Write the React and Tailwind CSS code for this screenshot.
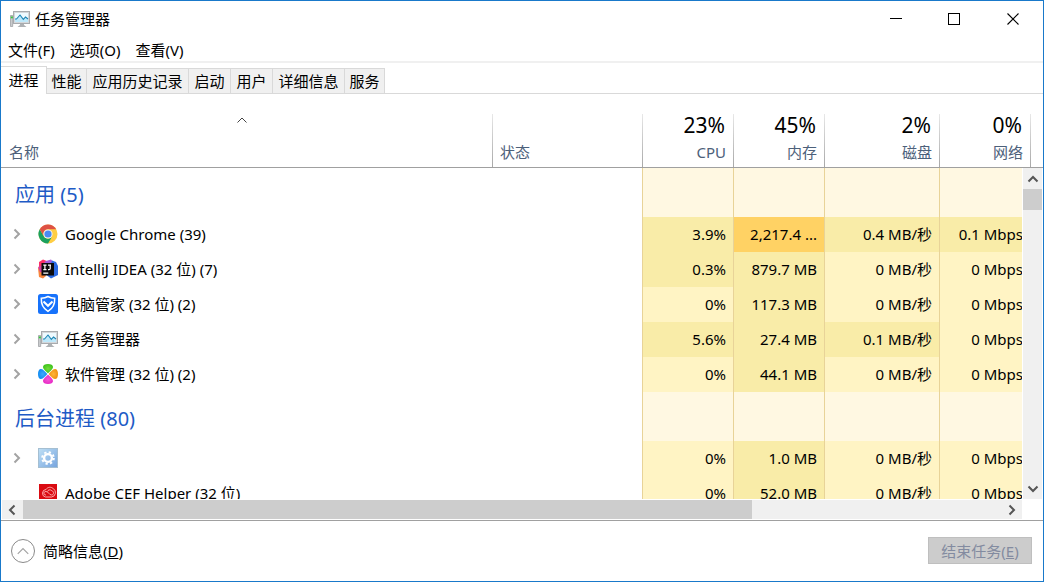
import React from "react";

function MonitorIcon() {
  return (
    <svg width="20" height="18" viewBox="0 0 20 18" className="shrink-0" aria-hidden="true">
      <path d="M10 13h4v2l2.500 2H7.500l2.500-2z" fill="#aeb1b4" />
      <path d="M0.500 5.500h2.200v11H.5z" fill="#c9cbcd" stroke="#96999c" strokeWidth="0.700" />
      <path d="M0.800 6.500h2v1.800h-2z" fill="#35c93b" />
      <rect x="3.500" y="1.500" width="16" height="12" fill="#d4d7da" stroke="#a8abae" />
      <rect x="5" y="3" width="13" height="9" fill="#eefaff" />
      <path d="M5 9h1.500L10 5l3.300 4.300L15.500 7 18 9v3H5z" fill="#bde8fa" />
      <path d="M5 9h1.500L10 5l3.300 4.300L15.500 7 18 9" fill="none" stroke="#1f86b5" strokeWidth="1.100" />
    </svg>
  );
}

function ChromeIcon() {
  return (
    <svg width="20" height="20" viewBox="0 0 20 20" aria-hidden="true">
      <circle cx="10" cy="10" r="9.500" fill="#ffce44" />
      <path d="M1.770 5.250A9.500 9.500 0 0 0 10 19.500L14.110 12.380A4.750 4.750 0 0 1 5.890 12.380z" fill="#1aa15f" />
      <path d="M1.770 5.250A9.500 9.500 0 0 1 18.230 5.250H10A4.750 4.750 0 0 0 5.890 12.380z" fill="#de5145" />
      <circle cx="10" cy="10" r="4.600" fill="#f4f4f4" />
      <circle cx="10" cy="10" r="3.600" fill="#4a8af4" />
    </svg>
  );
}

function IdeaIcon() {
  return (
    <svg width="20" height="20" viewBox="0 0 20 20" aria-hidden="true">
      <path d="M1 3L5 .5l5 2-2 9-7-3z" fill="#fc3067" />
      <path d="M8 2l5-1.500L16 4l-6 4-4-4z" fill="#a45cdc" />
      <path d="M14 1.500l4 1.500 2 4v9l-7 3.500-4-3z" fill="#2b6be4" />
      <path d="M0 9l4 1 4 7-3 2.500L1 18z" fill="#f8863c" />
      <path d="M0 8l5-2v8l-3-1z" fill="#d63f9b" />
      <rect x="3.500" y="4" width="12.500" height="12.500" fill="#0b0b0d" />
      <path d="M5.300 6.200h3.200M6.900 6.200v4.500M5.300 10.700h3.200M10 6.200h3M12.200 6.200v3.300q0 1.200-1.200 1.200h-1M5.300 14.200h5" fill="none" stroke="#fff" strokeWidth="1.200" />
    </svg>
  );
}

function ShieldIcon() {
  return (
    <svg width="20" height="20" viewBox="0 0 20 20" aria-hidden="true">
      <rect width="20" height="20" rx="2.500" fill="#1772fb" />
      <path d="M10 2.500c2.200 1.300 4.300 1.700 6.700 1.800.3 5.600-1.500 10-6.700 13.100C4.800 14.300 3 9.900 3.300 4.300 5.700 4.200 7.800 3.800 10 2.500z" fill="none" stroke="#fff" strokeWidth="1.500" />
      <path d="M5.500 7.500L10 11.800l4.500-4.300" fill="none" stroke="#fff" strokeWidth="2" />
    </svg>
  );
}

function CloverIcon() {
  return (
    <svg width="20" height="20" viewBox="0 0 20 20" aria-hidden="true">
      <defs>
        <radialGradient id="clover-green"><stop offset="0" stopColor="#74dc3c" /><stop offset="1" stopColor="#3fc41c" /></radialGradient>
        <radialGradient id="clover-orange"><stop offset="0" stopColor="#ffb63c" /><stop offset="1" stopColor="#f09412" /></radialGradient>
        <radialGradient id="clover-pink"><stop offset="0" stopColor="#f458d6" /><stop offset="1" stopColor="#e82cc6" /></radialGradient>
        <radialGradient id="clover-blue"><stop offset="0" stopColor="#3fa9fb" /><stop offset="1" stopColor="#128cf2" /></radialGradient>
      </defs>
      <path d="M10 9.300C8.500 7.800 5 5.300 5 3 5 1 7 0 10 0s5 1 5 3c0 2.300-3.500 4.800-5 6.300z" fill="url(#clover-green)" />
      <path d="M10.700 10C12.200 8.500 14.700 5 17 5c2 0 3 2 3 5s-1 5-3 5c-2.300 0-4.800-3.500-6.300-5z" fill="url(#clover-orange)" />
      <path d="M10 10.700C11.500 12.200 15 14.700 15 17c0 2-2 3-5 3s-5-1-5-3c0-2.300 3.500-4.800 5-6.300z" fill="url(#clover-pink)" />
      <path d="M9.300 10C7.800 11.500 5.300 15 3 15c-2 0-3-2-3-5s1-5 3-5c2.300 0 4.800 3.500 6.300 5z" fill="url(#clover-blue)" />
    </svg>
  );
}

function GearIcon() {
  return (
    <svg width="20" height="20" viewBox="0 0 20 20" aria-hidden="true">
      <defs>
        <linearGradient id="gear-bg" x1="0" y1="0" x2="1" y2="1">
          <stop offset="0" stopColor="#bfe0f5" />
          <stop offset="1" stopColor="#76a4de" />
        </linearGradient>
      </defs>
      <rect x="0.500" y="0.500" width="19" height="19" fill="url(#gear-bg)" stroke="#a5bfd2" />
      <circle cx="10" cy="10" r="5.800" fill="none" stroke="#fff" strokeWidth="2" strokeDasharray="2.280 2.275" />
      <circle cx="10" cy="10" r="3.900" fill="none" stroke="#fff" strokeWidth="2.400" />
    </svg>
  );
}

function AdobeIcon() {
  return (
    <svg width="20" height="20" viewBox="0 0 20 20" aria-hidden="true">
      <rect x="1" y="1" width="18" height="18" fill="#da0b12" />
      <g fill="none" stroke="#ffb9b9" strokeWidth="0.900">
        <path d="M7.500 14h6a4.500 4.500 0 0 0 1.500-8.500c-2-2-5.500-1.500-7 1A3.800 3.800 0 0 0 7.500 14z" />
        <path d="M8 12C5.500 12 5 8.500 8 8.500c2.500 0 3 3.500 5.500 3.500s2.800-3.500.3-4.300C12 6 9.800 7 9.500 8.500" />
      </g>
    </svg>
  );
}

function Chevron({ d, size = 12, width = 2, className = "" }) {
  return (
    <svg width={size} height={size} viewBox="0 0 12 12" className={className} fill="none" stroke="currentColor" strokeWidth={width} aria-hidden="true">
      <path d={d} />
    </svg>
  );
}

const UP = "M1.500 8.500L6 4l4.500 4.500";
const DOWN = "M1.500 3.500L6 8l4.500-4.500";
const LEFT = "M7.500 1.500L3 6l4.500 4.500";
const RIGHT = "M3.500 1.500L8 6l-4.500 4.500";

const TABS = [
  ["性能", "w-10"],
  ["应用历史记录", "w-[102px]"],
  ["启动", "w-[42px]"],
  ["用户", "w-[42px]"],
  ["详细信息", "w-[72px]"],
  ["服务", "w-10"],
];

const METRICS = [
  ["23%", "CPU"],
  ["45%", "内存"],
  ["2%", "磁盘"],
  ["0%", "网络"],
];

const HEAT = ["bg-[#fff4c4]", "bg-[#f9eca8]", "bg-[#ffd264]"];

const GROUPS = [
  {
    title: "应用 (5)",
    rows: [
      { name: "Google Chrome (39)", icon: ChromeIcon, cells: [["3.9%", 1], ["2,217.4 ...", 2], ["0.4 MB/秒", 1], ["0.1 Mbps", 1]] },
      { name: "IntelliJ IDEA (32 位) (7)", icon: IdeaIcon, cells: [["0.3%", 1], ["879.7 MB", 1], ["0 MB/秒", 0], ["0 Mbps", 0]] },
      { name: "电脑管家 (32 位) (2)", icon: ShieldIcon, cells: [["0%", 0], ["117.3 MB", 1], ["0 MB/秒", 0], ["0 Mbps", 0]] },
      { name: "任务管理器", icon: MonitorIcon, cells: [["5.6%", 1], ["27.4 MB", 1], ["0.1 MB/秒", 1], ["0 Mbps", 0]] },
      { name: "软件管理 (32 位) (2)", icon: CloverIcon, cells: [["0%", 0], ["44.1 MB", 1], ["0 MB/秒", 0], ["0 Mbps", 0]] },
    ],
  },
  {
    title: "后台进程 (80)",
    rows: [
      { name: "", icon: GearIcon, cells: [["0%", 0], ["1.0 MB", 1], ["0 MB/秒", 0], ["0 Mbps", 0]] },
      { name: "Adobe CEF Helper (32 位)", icon: AdobeIcon, leaf: true, cells: [["0%", 0], ["52.0 MB", 1], ["0 MB/秒", 0], ["0 Mbps", 0]] },
    ],
  },
];

function Columns({ spacer }) {
  return (
    <colgroup>
      <col />
      <col className="w-[150px]" />
      <col className="w-[91px]" />
      <col className="w-[91px]" />
      <col className="w-[115px]" />
      <col className="w-[91px]" />
      {spacer && <col className="w-[13px]" />}
    </colgroup>
  );
}

function Divider() {
  return <span className="w-px shrink-0 self-stretch bg-linear-to-b from-[#e8e8e8] to-[#a8a8a8]" />;
}

function TitleBar() {
  return (
    <header className="flex h-9 shrink-0 items-center justify-between pl-[9px]">
      <div className="flex items-center gap-[5px]">
        <MonitorIcon />
        <h1>任务管理器</h1>
      </div>
      <div className="flex self-stretch">
        <button aria-label="最小化" className="grid w-[58px] place-items-center">
          <svg width="12" height="12" viewBox="0 0 12 12" shapeRendering="crispEdges"><path d="M0 5.500h12" stroke="#000" /></svg>
        </button>
        <button aria-label="最大化" className="grid w-[58px] place-items-center">
          <svg width="12" height="12" viewBox="0 0 12 12" shapeRendering="crispEdges"><rect x="0.500" y="0.500" width="11" height="11" fill="none" stroke="#000" /></svg>
        </button>
        <button aria-label="关闭" className="grid w-[60px] place-items-center">
          <svg width="12" height="12" viewBox="0 0 12 12"><path d="M0.500 0.500l11 11M11.500 0.500l-11 11" stroke="#000" strokeWidth="1.100" /></svg>
        </button>
      </div>
    </header>
  );
}

function ProcessRow({ row }) {
  const Icon = row.icon;
  return (
    <tr className="h-[35px]">
      <th scope="row" className="p-0 pb-px text-left font-normal">
        <div className="flex items-center pl-2.5">
          {row.leaf ? (
            <span className="w-3" />
          ) : (
            <button aria-label="展开" className="w-3 text-[#a3a3a3]"><Chevron d={RIGHT} /></button>
          )}
          <span className="ml-[15px] mr-[7px] grid w-5 place-items-center"><Icon /></span>
          <span className="whitespace-nowrap">{row.name}</span>
        </div>
      </th>
      <td />
      {row.cells.map(([text, level], i) => (
        <td key={i} className={`whitespace-nowrap border-l border-[#e8d398] p-0 pb-px pr-[7px] text-right ${HEAT[level]}`}>{text}</td>
      ))}
    </tr>
  );
}

export default function App() {
  return (
    <main className="flex h-screen flex-col overflow-hidden border border-[#1979ca] bg-white font-['Noto_Sans','Noto_Sans_CJK_SC',sans-serif] text-[15px] leading-5 text-black">
      <TitleBar />
      <nav className="flex h-6 shrink-0 items-center gap-[15px] pl-[7px] pt-0.5">
        <button>文件(F)</button>
        <button>选项(O)</button>
        <button>查看(V)</button>
      </nav>
      <div className="h-0.5 shrink-0 bg-[#f0f0f0]" />

      <div role="tablist" className="mt-[3px] flex h-7 shrink-0 items-end">
        <button role="tab" aria-selected="true" className="h-7 w-[46px] border-r border-t border-[#d9d9d9] pb-0.5">进程</button>
        {TABS.map(([label, width]) => (
          <button key={label} role="tab" aria-selected="false" className={`h-[26px] whitespace-nowrap border-y border-r border-[#d9d9d9] bg-[#f0f0f0] ${width}`}>{label}</button>
        ))}
        <div className="flex-1 border-b border-[#d9d9d9]" />
      </div>

      <div className="shrink-0 border-b border-[#a0a0a0]">
        <table className="w-full table-fixed border-separate border-spacing-0">
          <Columns spacer />
          <thead>
            <tr className="text-[#4c607a]">
              <th className="p-0 font-normal">
                <div className="flex h-[73px] pt-5">
                  <button className="flex flex-1 flex-col pl-2 pr-[18px] text-left">
                    <Chevron d={UP} width={1} className="self-center text-[#444444]" />
                    <span className="mt-auto pb-[5px]">名称</span>
                  </button>
                </div>
              </th>
              <th className="p-0 font-normal">
                <div className="flex h-[73px] pt-5">
                  <Divider />
                  <button className="flex flex-1 items-end pb-[5px] pl-[7px]">状态</button>
                </div>
              </th>
              {METRICS.map(([value, label]) => (
                <th key={label} className="p-0 font-normal">
                  <div className="flex h-[73px] pt-5">
                    <Divider />
                    <button className="flex flex-1 flex-col items-end justify-between pb-[5px] pr-[7px]">
                      <span className="pr-px text-[21px] leading-[22px] text-black">{value}</span>
                      <span>{label}</span>
                    </button>
                  </div>
                </th>
              ))}
              <th className="p-0">
                <div className="flex h-[73px] pt-5"><Divider /></div>
              </th>
            </tr>
          </thead>
        </table>
      </div>

      <div className="flex min-h-0 flex-1">
        <div className="min-w-0 flex-1 overflow-hidden">
          <table className="w-[calc(100%+8px)] table-fixed border-separate border-spacing-0">
            <Columns />
            {GROUPS.map((group) => (
              <tbody key={group.title}>
                <tr className="h-[49px]">
                  <th scope="rowgroup" colSpan={2} className="p-0 pl-3.5 pt-1 text-left text-xl font-normal text-[#1e5bc6]">{group.title}</th>
                  {METRICS.map(([, label]) => (
                    <td key={label} className="border-l border-[#e8d398] bg-[#fff8e2] p-0" />
                  ))}
                </tr>
                {group.rows.map((row, i) => <ProcessRow key={i} row={row} />)}
              </tbody>
            ))}
          </table>
        </div>
        <div className="ml-px mr-px flex w-[19px] shrink-0 flex-col items-stretch bg-[#f0f0f0] text-[#555555]">
          <button aria-label="向上滚动" className="grid h-[21px] place-items-center"><Chevron d={UP} /></button>
          <div className="h-[21px] bg-[#cdcdcd]" />
          <button aria-label="向下滚动" className="mt-auto grid h-[21px] place-items-center"><Chevron d={DOWN} /></button>
        </div>
      </div>

      <div className="mt-px flex h-[20px] shrink-0 pb-px pl-px pr-[21px] text-[#555555]">
        <div className="flex flex-1 bg-[#f0f0f0]">
          <button aria-label="向左滚动" className="grid w-[21px] place-items-center"><Chevron d={LEFT} /></button>
          <div className="w-5/7 bg-[#cdcdcd]" />
          <button aria-label="向右滚动" className="ml-auto grid w-[21px] place-items-center"><Chevron d={RIGHT} /></button>
        </div>
      </div>

      <footer className="flex h-[61px] shrink-0 items-center justify-between border-t border-[#a0a0a0] pb-px pl-2.5 pr-[11px]">
        <button className="flex items-center gap-2">
          <span className="grid size-6 place-items-center rounded-full border border-[#8a8a8a] text-[#a3a3a3]"><Chevron d={UP} size={14} width={1} /></span>
          <span>简略信息(<u>D</u>)</span>
        </button>
        <button disabled className="h-[27px] w-[104px] border border-[#bfbfbf] bg-[#cccccc] text-[#838ba0]">结束任务(<u>E</u>)</button>
      </footer>
    </main>
  );
}
